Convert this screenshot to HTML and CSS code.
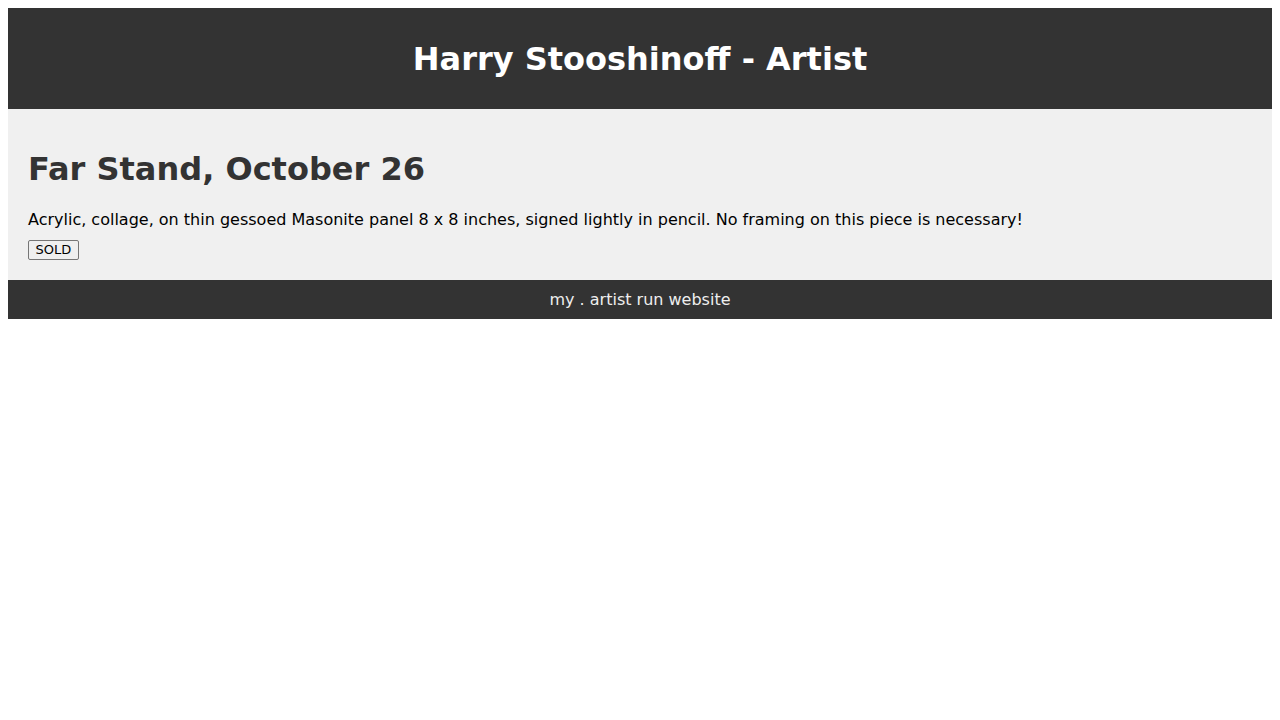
FILE: index.html
```html
<!DOCTYPE html>
<html lang="en">
<head>
<meta charset="utf-8">
<title>Harry Stooshinoff - Artist</title>
<link rel="stylesheet" href="styles.css">
</head>
<body>
<header class="site-header">
  <h1 class="site-title">Harry Stooshinoff - Artist</h1>
</header>
<main class="content">
  <h2 class="piece-title">Far Stand, October 26</h2>
  <p class="piece-desc">Acrylic, collage, on thin gessoed Masonite panel 8 x 8 inches, signed lightly in pencil. No framing on this piece is necessary!</p>
  <div class="piece-status"><button class="sold-btn">SOLD</button></div>
</main>
<footer class="site-footer">my . artist run website</footer>
</body>
</html>
```
FILE: styles.css
```css
body {
  margin: 8px;
  font-family: "DejaVu Sans", sans-serif;
  font-size: 16px;
}
.site-header {
  background: #333333;
  color: #ffffff;
  padding: 11px 10px 9px;
  text-align: center;
}
.site-title {
  margin: 22px 0;
  font-size: 32px;
  line-height: 37px;
  font-weight: bold;
}
.content {
  background: #f0f0f0;
  padding: 20px;
}
.piece-title {
  margin: 22px 0;
  font-size: 32px;
  line-height: 37px;
  color: #333333;
}
.piece-desc {
  margin: 0 0 11px;
  line-height: 19px;
  color: #000;
}
.piece-status {
  display: flex;
}
.sold-btn {
  font-family: "DejaVu Sans", sans-serif;
  font-size: 13px;
  height: 20px;
  padding: 0 6.5px;
  line-height: 16px;
  background: #efefef;
  border: 1px solid #767676;
  border-radius: 2px;
  color: #000;
}
.site-footer {
  background: #333333;
  color: #eeeeee;
  text-align: center;
  padding: 10px;
  line-height: 19px;
}
```
